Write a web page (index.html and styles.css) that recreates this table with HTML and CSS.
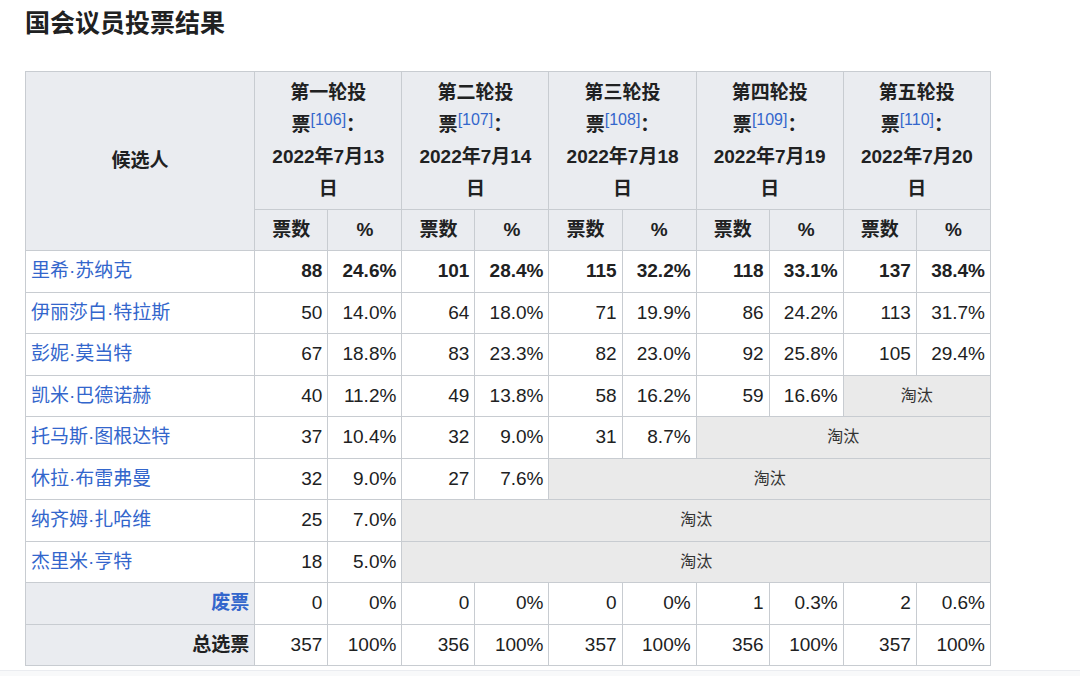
FILE: index.html
```html
<!DOCTYPE html>
<html lang="zh-CN">
<head>
<meta charset="utf-8">
<title>国会议员投票结果</title>
<link rel="stylesheet" href="styles.css">
</head>
<body>
<main class="page">
  <h2 class="title">国会议员投票结果</h2>
  <table class="wikitable">
    <colgroup>
      <col class="c-name">
      <col class="c-n"><col class="c-p">
      <col class="c-n"><col class="c-p">
      <col class="c-n"><col class="c-p">
      <col class="c-n"><col class="c-p">
      <col class="c-n"><col class="c-p">
    </colgroup>
    <thead>
      <tr class="head1">
        <th rowspan="2" class="h-cand">候选人</th>
        <th colspan="2">第一轮投<br>票<sup><a href="#">[106]</a></sup>：<br>2022年7月13<br>日</th>
        <th colspan="2">第二轮投<br>票<sup><a href="#">[107]</a></sup>：<br>2022年7月14<br>日</th>
        <th colspan="2">第三轮投<br>票<sup><a href="#">[108]</a></sup>：<br>2022年7月18<br>日</th>
        <th colspan="2">第四轮投<br>票<sup><a href="#">[109]</a></sup>：<br>2022年7月19<br>日</th>
        <th colspan="2">第五轮投<br>票<sup><a href="#">[110]</a></sup>：<br>2022年7月20<br>日</th>
      </tr>
      <tr class="head2">
        <th>票数</th><th>%</th>
        <th>票数</th><th>%</th>
        <th>票数</th><th>%</th>
        <th>票数</th><th>%</th>
        <th>票数</th><th>%</th>
      </tr>
    </thead>
    <tbody>
      <tr class="win">
        <td class="name"><a href="#">里希·苏纳克</a></td>
        <td>88</td><td>24.6%</td>
        <td>101</td><td>28.4%</td>
        <td>115</td><td>32.2%</td>
        <td>118</td><td>33.1%</td>
        <td>137</td><td>38.4%</td>
      </tr>
      <tr>
        <td class="name"><a href="#">伊丽莎白·特拉斯</a></td>
        <td>50</td><td>14.0%</td>
        <td>64</td><td>18.0%</td>
        <td>71</td><td>19.9%</td>
        <td>86</td><td>24.2%</td>
        <td>113</td><td>31.7%</td>
      </tr>
      <tr>
        <td class="name"><a href="#">彭妮·莫当特</a></td>
        <td>67</td><td>18.8%</td>
        <td>83</td><td>23.3%</td>
        <td>82</td><td>23.0%</td>
        <td>92</td><td>25.8%</td>
        <td>105</td><td>29.4%</td>
      </tr>
      <tr>
        <td class="name"><a href="#">凯米·巴德诺赫</a></td>
        <td>40</td><td>11.2%</td>
        <td>49</td><td>13.8%</td>
        <td>58</td><td>16.2%</td>
        <td>59</td><td>16.6%</td>
        <td colspan="2" class="out">淘汰</td>
      </tr>
      <tr>
        <td class="name"><a href="#">托马斯·图根达特</a></td>
        <td>37</td><td>10.4%</td>
        <td>32</td><td>9.0%</td>
        <td>31</td><td>8.7%</td>
        <td colspan="4" class="out">淘汰</td>
      </tr>
      <tr>
        <td class="name"><a href="#">休拉·布雷弗曼</a></td>
        <td>32</td><td>9.0%</td>
        <td>27</td><td>7.6%</td>
        <td colspan="6" class="out">淘汰</td>
      </tr>
      <tr>
        <td class="name"><a href="#">纳齐姆·扎哈维</a></td>
        <td>25</td><td>7.0%</td>
        <td colspan="8" class="out">淘汰</td>
      </tr>
      <tr>
        <td class="name"><a href="#">杰里米·亨特</a></td>
        <td>18</td><td>5.0%</td>
        <td colspan="8" class="out">淘汰</td>
      </tr>
      <tr>
        <th class="rowhead"><a href="#">废票</a></th>
        <td>0</td><td>0%</td>
        <td>0</td><td>0%</td>
        <td>0</td><td>0%</td>
        <td>1</td><td>0.3%</td>
        <td>2</td><td>0.6%</td>
      </tr>
      <tr>
        <th class="rowhead">总选票</th>
        <td>357</td><td>100%</td>
        <td>356</td><td>100%</td>
        <td>357</td><td>100%</td>
        <td>356</td><td>100%</td>
        <td>357</td><td>100%</td>
      </tr>
    </tbody>
  </table>
</main>
<footer class="footer"></footer>
</body>
</html>
```

FILE: styles.css
```css
html, body {
  margin: 0;
  padding: 0;
  background: #ffffff;
}

body {
  font-family: "Liberation Sans", "Noto Sans CJK SC", sans-serif;
  color: #202122;
  width: 1080px;
  height: 676px;
  overflow: hidden;
  display: flex;
  flex-direction: column;
}

.page {
  padding: 0 25px;
  height: 670px;
}

.title {
  margin: 0;
  padding-top: 7px;
  height: 71px;
  box-sizing: border-box;
  font-size: 25px;
  line-height: 32px;
  font-weight: bold;
  color: #202122;
}

a {
  color: #3366cc;
  text-decoration: none;
}

.wikitable {
  border-collapse: collapse;
  table-layout: fixed;
  width: 966px;
  font-size: 19px;
  background: #ffffff;
  border: 1px solid #c8ccd1;
}

.c-name { width: 229px; }
.c-n { width: 73px; }
.c-p { width: 74px; }

.wikitable th,
.wikitable td {
  border: 1px solid #c8ccd1;
  padding: 0 5px;
  line-height: 24px;
  white-space: nowrap;
}

.wikitable th {
  background: #eaecf0;
  font-weight: bold;
  text-align: center;
}

.head1 th {
  height: 131px;
  line-height: 32px;
  padding: 3px 5px;
}

.head1 .h-cand {
  padding: 0 5px;
}

.head2 th {
  height: 41px;
  box-sizing: border-box;
}

.wikitable sup {
  font-size: 16px;
  font-weight: normal;
  line-height: 0;
  vertical-align: 6px;
}

.wikitable tbody tr {
  height: 41.5px;
}

.wikitable td {
  text-align: right;
}

.wikitable td.name {
  text-align: left;
}

.win td {
  font-weight: bold;
}

.win td.name {
  font-weight: normal;
}

.wikitable td.out {
  background: #eaeaea;
  text-align: center;
  font-size: 16px;
  color: #333333;
}

.wikitable th.rowhead {
  text-align: right;
}

.footer {
  flex: 1;
  background: #f8f9fa;
  border-top: 1px solid #eaecf0;
}
```
